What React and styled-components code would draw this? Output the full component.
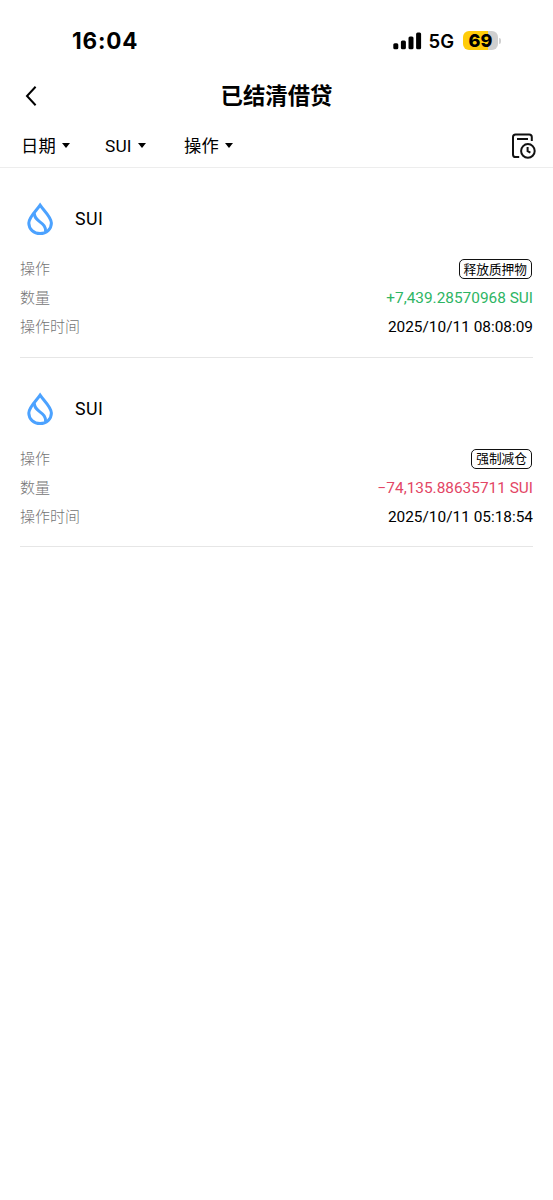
import React from "react";
import styled, { createGlobalStyle } from "styled-components";

const records = [
	{
		id: 1,
		coin: "SUI",
		action: "释放质押物",
		amount: "+7,439.28570968 SUI",
		gain: true,
		time: "2025/10/11 08:08:09",
	},
	{
		id: 2,
		coin: "SUI",
		action: "强制减仓",
		amount: "−74,135.88635711 SUI",
		gain: false,
		time: "2025/10/11 05:18:54",
	},
];

const SignalIcon = () => (
	<svg width="29" height="18" viewBox="0 0 29 18" fill="#000">
		<rect x="0.3" y="11.2" width="5" height="6" rx="1.5" />
		<rect x="7.9" y="8.4" width="5" height="8.8" rx="1.5" />
		<rect x="15.5" y="4.6" width="5" height="12.6" rx="1.5" />
		<rect x="23.1" y="0.4" width="5" height="16.8" rx="1.5" />
	</svg>
);

const BackIcon = () => (
	<svg width="12" height="20" viewBox="0 0 12 20" fill="none" stroke="#000" strokeWidth="2">
		<path d="M10.6 0.8 L2 10 L10.6 19.2" />
	</svg>
);

const HistoryIcon = () => (
	<svg width="26" height="26" viewBox="0 0 26 26" fill="none" stroke="#111" strokeWidth="2">
		<path d="M8.2 24 H4.6 Q2 24 2 21.4 V4.1 Q2 1.5 4.6 1.5 H18.2 Q20.8 1.5 20.8 4.1 V8" />
		<path d="M6 6 H17" />
		<circle cx="16.9" cy="17.9" r="6.8" />
		<path d="M16.6 14 V18.1 L19.4 19.6" />
	</svg>
);

const SuiIcon = () => (
	<svg width="28" height="34" viewBox="0 0 28 34" fill="none" stroke="#4ca2ff" strokeWidth="3">
		<path d="M14.1 3.2 C10.6 8.4 2.8 15 2.8 21 C2.8 27 7.8 31.6 14.1 31.6 C20.4 31.6 25.4 27 25.4 21 C25.4 15 17.6 8.4 14.1 3.2 Z" />
		<path d="M8.4 11.2 C8.2 15.2 10.2 17 13.6 19.6 C17.4 22.4 20 24.6 19.6 29.6" />
	</svg>
);

const Filter = ({ label, width }) => (
	<FilterButton $width={width}>
		{label}
		<Caret />
	</FilterButton>
);

const Record = ({ record }) => (
	<RecordCard>
		<CoinRow>
			<SuiIcon />
			<CoinName>{record.coin}</CoinName>
		</CoinRow>
		<DetailRow>
			<Label>操作</Label>
			<Tag>{record.action}</Tag>
		</DetailRow>
		<DetailRow>
			<Label>数量</Label>
			<Amount $gain={record.gain}>{record.amount}</Amount>
		</DetailRow>
		<DetailRow>
			<Label>操作时间</Label>
			<Value>{record.time}</Value>
		</DetailRow>
	</RecordCard>
);

const App = () => {
	return (
		<Page>
			<GlobalStyle />
			<StatusBar>
				<Clock>16:04</Clock>
				<StatusIcons>
					<SignalIcon />
					<Network>5G</Network>
					<Battery>
						<BatteryBody>69</BatteryBody>
						<BatteryTip />
					</Battery>
				</StatusIcons>
			</StatusBar>
			<Header>
				<BackButton>
					<BackIcon />
				</BackButton>
				<Title>已结清借贷</Title>
			</Header>
			<FilterBar>
				<Filter label="日期" width="84px" />
				<Filter label="SUI" width="79px" />
				<Filter label="操作" width="60px" />
				<HistoryButton>
					<HistoryIcon />
				</HistoryButton>
			</FilterBar>
			<RecordList>
				{records.map((record) => (
					<Record key={record.id} record={record} />
				))}
			</RecordList>
		</Page>
	);
};

const GlobalStyle = createGlobalStyle`
	* {
		box-sizing: border-box;
	}

	body {
		margin: 0;
		background: #fff;
	}

	button {
		border: 0;
		padding: 0;
		background: none;
		color: inherit;
		font: inherit;
	}

	svg {
		display: block;
		flex-shrink: 0;
	}
`;

const Page = styled.main`
	min-height: 1200px;
	background: #fff;
	color: #000;
	font-family: Roboto, "Noto Sans CJK SC", sans-serif;
`;

const StatusBar = styled.div`
	height: 70px;
	padding: 11px 52px 0 72px;
	display: flex;
	align-items: center;
	justify-content: space-between;
	font-family: Inter, sans-serif;
`;

const Clock = styled.div`
	font-size: 22.5px;
	font-weight: 700;
	line-height: 28px;
	letter-spacing: 0.8px;
`;

const StatusIcons = styled.div`
	display: flex;
	align-items: center;
`;

const Network = styled.span`
	margin-left: 7px;
	padding-top: 1px;
	font-size: 18.5px;
	font-weight: 600;
	line-height: 24px;
`;

const Battery = styled.div`
	margin-left: 9px;
	display: flex;
	align-items: center;
	gap: 1px;
`;

const BatteryBody = styled.div`
	width: 35px;
	height: 19px;
	border-radius: 6px;
	background: linear-gradient(90deg, #ffcc0a 71%, #cfcfcf 71%);
	font-size: 18px;
	font-weight: 800;
	line-height: 19px;
	text-align: center;
`;

const BatteryTip = styled.div`
	width: 2px;
	height: 6px;
	border-radius: 0 2px 2px 0;
	background: #cfcfcf;
`;

const Header = styled.header`
	height: 52px;
	padding: 0 25px;
	display: grid;
	grid-template-columns: 40px 1fr 40px;
	align-items: center;
`;

const BackButton = styled.button`
	width: 12px;
`;

const Title = styled.h1`
	margin: 0;
	font-size: 22.4px;
	font-weight: 700;
	line-height: 32px;
	text-align: center;
`;

const FilterBar = styled.nav`
	height: 46px;
	padding: 2px 16px 0 21px;
	display: flex;
	align-items: center;
	border-bottom: 1px solid #ededed;
`;

const FilterButton = styled.button`
	width: ${({ $width }) => $width};
	display: flex;
	align-items: center;
	gap: 6px;
	font-size: 17.3px;
	line-height: 24px;
	letter-spacing: 0.2px;
`;

const Caret = styled.span`
	border-top: 5px solid #000;
	border-left: 4px solid transparent;
	border-right: 4px solid transparent;
`;

const HistoryButton = styled.button`
	margin-left: auto;
`;

const RecordList = styled.section`
	padding: 0 20px;
`;

const RecordCard = styled.article`
	height: 189.5px;
	padding-top: 34px;
	border-bottom: 1px solid #e6e6e6;
`;

const CoinRow = styled.div`
	height: 34px;
	margin-bottom: 18.5px;
	padding-left: 6px;
	display: flex;
	align-items: center;
	gap: 21px;
`;

const CoinName = styled.h2`
	margin: 0;
	padding-bottom: 1px;
	font-size: 17.8px;
	font-weight: 400;
	letter-spacing: 0.4px;
`;

const DetailRow = styled.div`
	height: 29.2px;
	display: flex;
	align-items: center;
	justify-content: space-between;
`;

const Label = styled.span`
	color: #757575;
	font-size: 15px;
	font-weight: 300;
	line-height: 20px;
`;

const Value = styled.span`
	font-size: 15.4px;
	line-height: 20px;
`;

const Amount = styled(Value)`
	color: ${({ $gain }) => ($gain ? "#2eb564" : "#e34665")};
`;

const Tag = styled.span`
	height: 20px;
	margin-right: 1px;
	padding: 0 4px;
	display: flex;
	align-items: center;
	border: 1.5px solid #111;
	border-radius: 5px;
	font-size: 12.7px;
	line-height: 17px;
`;

export default App;
